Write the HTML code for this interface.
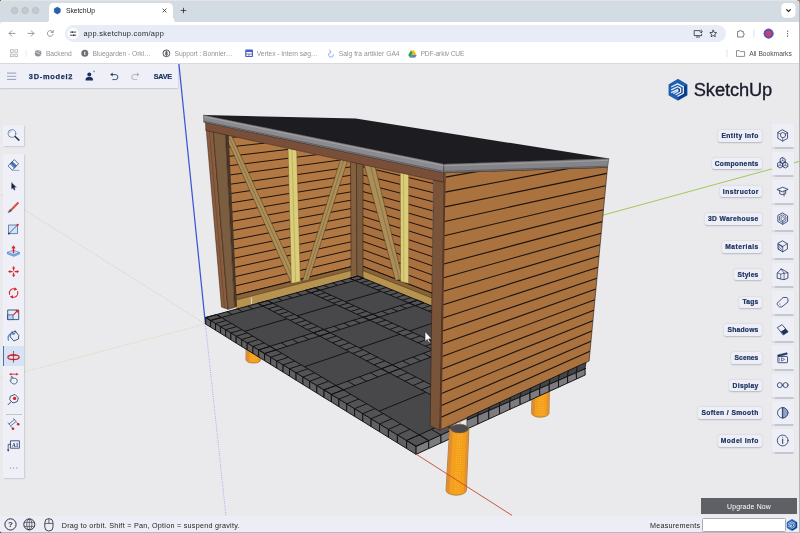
<!DOCTYPE html>
<html><head><meta charset="utf-8"><title>SketchUp</title>
<style>
html,body{margin:0;padding:0;background:#e9e9eb;}
body{width:800px;height:533px;overflow:hidden;font-family:"Liberation Sans",sans-serif;}
#root{position:relative;width:800px;height:533px;overflow:hidden;background:#eaeaec;}
.abs{position:absolute;}
svg{overflow:visible;}
#tabbar{left:0;top:0;width:800px;height:22px;background:#d3dbe3;}
#tab{left:49px;top:3px;width:124px;height:19px;background:#fff;border-radius:4.5px 4.5px 0 0;}
#toolbar{left:0;top:21.6px;width:800px;height:24px;background:#fff;border-radius:3.5px 3.5px 0 0;}
#urlpill{left:65px;top:25px;width:661px;height:17.4px;background:#e8ecf7;border-radius:9px;}
#bookbar{left:0;top:45px;width:800px;height:18.3px;background:#fff;border-bottom:0.8px solid #d9dade;}
.t{position:absolute;white-space:nowrap;line-height:1;transform-origin:0 50%;}
.bm{color:#909398;font-size:6.7px;top:49.9px;}
#apptb{left:0;top:63.9px;width:177.6px;height:23.7px;background:#eff0f7;box-shadow:0 0.8px 1.6px rgba(70,80,110,.42);}
.navy{color:#1d3160;font-weight:bold;}
.panel{position:absolute;background:#eff0f7;box-shadow:0.6px 0.8px 1.6px rgba(70,80,110,.42);}
#status{left:0;top:515.6px;width:800px;height:17.4px;background:#edeef5;}
.lab{position:absolute;height:11.7px;background:#eeeff6;border-radius:2px;box-shadow:0 0.9px 1.5px rgba(70,80,110,.32);}
.lt{color:#1d3160;font-weight:bold;font-size:6.7px;}
.ib{position:absolute;left:772px;width:22.2px;height:23px;background:#eeeff6;box-shadow:0 1.6px 0.9px rgba(150,155,178,.45);}
.ic{position:absolute;}

</style></head>
<body>
<div id="root">
<svg width="800" height="533" viewBox="0 0 800 533" style="position:absolute;left:0;top:0"><defs>
<linearGradient id="og" x1="0" x2="1" y1="0" y2="0"><stop offset="0" stop-color="#e08f3a"/><stop offset="0.22" stop-color="#f5a11c"/><stop offset="0.55" stop-color="#f8a81f"/><stop offset="0.85" stop-color="#f19a1a"/><stop offset="1" stop-color="#d98a3a"/></linearGradient>
<clipPath id="clipLW"><polygon points="227.0,135.1 351.0,161.9 351.0,282.0 236.0,312.0"/></clipPath>
<clipPath id="clipBW"><polygon points="363.0,164.5 433.0,179.7 432.0,312.0 363.0,282.0"/></clipPath>
<clipPath id="clipRW"><polygon points="443.8,172.7 607.5,167.3 589.1,361.1 439.8,430.2"/></clipPath>
</defs><line x1="205.4" y1="324.0" x2="800.0" y2="161.2" stroke="#97c03c" stroke-width="0.85" />
<line x1="205.4" y1="324.0" x2="0.0" y2="378.2" stroke="#c4c07a" stroke-width="0.7" stroke-dasharray="0.8 1.3" opacity="0.85"/>
<line x1="205.4" y1="324.0" x2="0.0" y2="194.4" stroke="#d3a48e" stroke-width="0.7" stroke-dasharray="0.8 1.3" opacity="0.85"/>
<line x1="178.9" y1="64.0" x2="205.4" y2="324.0" stroke="#3a55d8" stroke-width="1.25" />
<line x1="205.4" y1="324.0" x2="226.0" y2="516.0" stroke="#7f93e6" stroke-width="0.8" stroke-dasharray="0.8 1.4"/>
<path d="M246.4,335.0 L245.9,359.6 A7.5,3.9 0 0 0 260.8,359.6 L261.2,335.0 Z" fill="#f5a01a" stroke="#a8763a" stroke-width="0.8"/><path d="M246.8,335.0 L246.3,359.6 L249.1,362.5 L249.8,335.0 Z" fill="#d98a3c" opacity="0.85"/><path d="M260.8,335.0 L260.4,359.6 L258.2,362.3 L258.4,335.0 Z" fill="#dd8e3a" opacity="0.8"/><line x1="252.4" y1="339.0" x2="252.0" y2="362.0" stroke="#ffd76a" stroke-width="0.7" stroke-dasharray="0.7 1.6" opacity="0.85"/><line x1="254.4" y1="339.0" x2="254.0" y2="362.0" stroke="#ffd76a" stroke-width="0.7" stroke-dasharray="0.7 1.6" opacity="0.85"/><line x1="256.4" y1="339.0" x2="256.0" y2="362.0" stroke="#ffd76a" stroke-width="0.7" stroke-dasharray="0.7 1.6" opacity="0.85"/>
<path d="M532.2,380.0 L531.6,413.2 A8.7,4.0 0 0 0 549.0,413.2 L549.6,380.0 Z" fill="#f5a01a" stroke="#a8763a" stroke-width="0.8"/><path d="M532.6,380.0 L532.0,413.2 L534.8,416.2 L535.6,380.0 Z" fill="#d98a3c" opacity="0.85"/><path d="M549.2,380.0 L548.6,413.2 L546.4,416.0 L546.8,380.0 Z" fill="#dd8e3a" opacity="0.8"/><line x1="539.5" y1="384.0" x2="538.9" y2="415.7" stroke="#ffd76a" stroke-width="0.7" stroke-dasharray="0.7 1.6" opacity="0.85"/><line x1="541.5" y1="384.0" x2="540.9" y2="415.7" stroke="#ffd76a" stroke-width="0.7" stroke-dasharray="0.7 1.6" opacity="0.85"/><line x1="543.5" y1="384.0" x2="542.9" y2="415.7" stroke="#ffd76a" stroke-width="0.7" stroke-dasharray="0.7 1.6" opacity="0.85"/>
<g clip-path="url(#clipLW)">
<polygon points="200.0,100.0 360.0,100.0 360.0,320.0 200.0,320.0" fill="#b27843" />
<line x1="220.0" y1="299.0" x2="356.0" y2="265.5" stroke="#1c130c" stroke-width="1.0" />
<line x1="220.0" y1="289.6" x2="356.0" y2="257.2" stroke="#1c130c" stroke-width="1.0" />
<line x1="220.0" y1="280.1" x2="356.0" y2="248.9" stroke="#1c130c" stroke-width="1.0" />
<line x1="220.0" y1="270.7" x2="356.0" y2="240.7" stroke="#1c130c" stroke-width="1.0" />
<line x1="220.0" y1="261.2" x2="356.0" y2="232.4" stroke="#1c130c" stroke-width="1.0" />
<line x1="220.0" y1="251.8" x2="356.0" y2="224.1" stroke="#1c130c" stroke-width="1.0" />
<line x1="220.0" y1="242.4" x2="356.0" y2="215.8" stroke="#1c130c" stroke-width="1.0" />
<line x1="220.0" y1="232.9" x2="356.0" y2="207.6" stroke="#1c130c" stroke-width="1.0" />
<line x1="220.0" y1="223.5" x2="356.0" y2="199.3" stroke="#1c130c" stroke-width="1.0" />
<line x1="220.0" y1="214.1" x2="356.0" y2="191.0" stroke="#1c130c" stroke-width="1.0" />
<line x1="220.0" y1="204.6" x2="356.0" y2="182.8" stroke="#1c130c" stroke-width="1.0" />
<line x1="220.0" y1="195.2" x2="356.0" y2="174.5" stroke="#1c130c" stroke-width="1.0" />
<line x1="220.0" y1="185.7" x2="356.0" y2="166.2" stroke="#1c130c" stroke-width="1.0" />
<line x1="220.0" y1="176.3" x2="356.0" y2="157.9" stroke="#1c130c" stroke-width="1.0" />
<line x1="220.0" y1="166.9" x2="356.0" y2="149.7" stroke="#1c130c" stroke-width="1.0" />
<line x1="220.0" y1="157.4" x2="356.0" y2="141.4" stroke="#1c130c" stroke-width="1.0" />
<line x1="220.0" y1="148.0" x2="356.0" y2="133.1" stroke="#1c130c" stroke-width="1.0" />
<line x1="220.0" y1="138.5" x2="356.0" y2="124.8" stroke="#1c130c" stroke-width="1.0" />
<line x1="220.0" y1="129.1" x2="356.0" y2="116.6" stroke="#1c130c" stroke-width="1.0" />
<line x1="220.0" y1="119.7" x2="356.0" y2="108.3" stroke="#1c130c" stroke-width="1.0" />
<line x1="220.0" y1="110.2" x2="356.0" y2="100.0" stroke="#1c130c" stroke-width="1.0" />
<line x1="220.0" y1="100.8" x2="356.0" y2="91.8" stroke="#1c130c" stroke-width="1.0" />
<polygon points="225.0,297.8 358.0,265.0 358.0,268.7 225.0,302.8" fill="#8a6238" />
<polygon points="225.0,302.8 358.0,268.7 358.0,283.0 225.0,317.0" fill="#b6934f" stroke="#3a2a14" stroke-width="0.5" stroke-linejoin="round" />
<line x1="225.0" y1="297.8" x2="358.0" y2="265.0" stroke="#1c130c" stroke-width="1.0" />
<polygon points="224.5,134.0 231.5,135.5 298.5,282.0 291.5,283.6" fill="#ab8e58" stroke="#4a3818" stroke-width="0.5" stroke-linejoin="round" />
<line x1="228.0" y1="134.8" x2="295.0" y2="282.8" stroke="#7a6238" stroke-width="0.6" />
<polygon points="302.4,281.4 308.8,280.0 351.0,150.0 343.5,150.0" fill="#ab8e58" stroke="#4a3818" stroke-width="0.5" stroke-linejoin="round" />
<line x1="305.6" y1="280.7" x2="347.0" y2="150.0" stroke="#7a6238" stroke-width="0.6" />
<polygon points="287.8,140.0 296.4,140.0 300.4,281.5 291.4,283.6" fill="#dccd7c" stroke="#6a5a20" stroke-width="0.5" stroke-linejoin="round" />
<line x1="291.6" y1="140.0" x2="295.6" y2="282.5" stroke="#b9a955" stroke-width="0.8" />
</g>
<g clip-path="url(#clipBW)">
<polygon points="355.0,140.0 440.0,140.0 440.0,320.0 355.0,320.0" fill="#a97040" />
<line x1="355.0" y1="263.2" x2="440.0" y2="296.3" stroke="#1c130c" stroke-width="1.0" />
<line x1="355.0" y1="255.0" x2="440.0" y2="287.0" stroke="#1c130c" stroke-width="1.0" />
<line x1="355.0" y1="246.8" x2="440.0" y2="277.8" stroke="#1c130c" stroke-width="1.0" />
<line x1="355.0" y1="238.6" x2="440.0" y2="268.5" stroke="#1c130c" stroke-width="1.0" />
<line x1="355.0" y1="230.4" x2="440.0" y2="259.2" stroke="#1c130c" stroke-width="1.0" />
<line x1="355.0" y1="222.2" x2="440.0" y2="250.0" stroke="#1c130c" stroke-width="1.0" />
<line x1="355.0" y1="214.0" x2="440.0" y2="240.7" stroke="#1c130c" stroke-width="1.0" />
<line x1="355.0" y1="205.8" x2="440.0" y2="231.4" stroke="#1c130c" stroke-width="1.0" />
<line x1="355.0" y1="197.6" x2="440.0" y2="222.2" stroke="#1c130c" stroke-width="1.0" />
<line x1="355.0" y1="189.4" x2="440.0" y2="212.9" stroke="#1c130c" stroke-width="1.0" />
<line x1="355.0" y1="181.2" x2="440.0" y2="203.6" stroke="#1c130c" stroke-width="1.0" />
<line x1="355.0" y1="173.0" x2="440.0" y2="194.4" stroke="#1c130c" stroke-width="1.0" />
<line x1="355.0" y1="164.8" x2="440.0" y2="185.1" stroke="#1c130c" stroke-width="1.0" />
<line x1="355.0" y1="156.6" x2="440.0" y2="175.8" stroke="#1c130c" stroke-width="1.0" />
<line x1="355.0" y1="148.4" x2="440.0" y2="166.6" stroke="#1c130c" stroke-width="1.0" />
<line x1="355.0" y1="140.2" x2="440.0" y2="157.3" stroke="#1c130c" stroke-width="1.0" />
<line x1="355.0" y1="132.0" x2="440.0" y2="148.0" stroke="#1c130c" stroke-width="1.0" />
<line x1="355.0" y1="123.8" x2="440.0" y2="138.8" stroke="#1c130c" stroke-width="1.0" />
<line x1="355.0" y1="115.6" x2="440.0" y2="129.5" stroke="#1c130c" stroke-width="1.0" />
<line x1="355.0" y1="107.4" x2="440.0" y2="120.2" stroke="#1c130c" stroke-width="1.0" />
<polygon points="355.0,263.2 440.0,296.3 440.0,301.2 355.0,267.5" fill="#8a6238" />
<polygon points="355.0,267.5 440.0,301.2 440.0,318.0 355.0,285.0" fill="#b6934f" stroke="#3a2a14" stroke-width="0.5" stroke-linejoin="round" />
<line x1="355.0" y1="263.2" x2="440.0" y2="296.3" stroke="#1c130c" stroke-width="1.0" />
<polygon points="363.0,160.0 373.5,160.0 402.5,279.0 395.5,280.5" fill="#ab8e58" stroke="#4a3818" stroke-width="0.5" stroke-linejoin="round" />
<line x1="369.0" y1="160.0" x2="399.5" y2="279.8" stroke="#7a6238" stroke-width="0.6" />
<polygon points="400.2,165.0 408.7,165.0 408.7,283.6 400.6,281.5" fill="#dccd7c" stroke="#6a5a20" stroke-width="0.5" stroke-linejoin="round" />
<line x1="403.6" y1="165.0" x2="403.8" y2="282.5" stroke="#b9a955" stroke-width="0.8" />
</g>
<polygon points="350.5,159.8 356.5,161.1 356.8,282.0 351.2,282.0" fill="#83603f" stroke="#2a1a10" stroke-width="0.5" stroke-linejoin="round" />
<polygon points="356.5,161.1 363.0,162.5 363.0,282.0 356.8,282.0" fill="#7a5c3c" stroke="#2a1a10" stroke-width="0.5" stroke-linejoin="round" />
<polygon points="205.7,317.5 210.6,320.5 210.6,327.1 205.7,324.1" fill="#606062" stroke="#111112" stroke-width="0.95" stroke-linejoin="round" />
<polygon points="210.6,320.5 215.5,323.5 215.5,330.2 210.6,327.1" fill="#606062" stroke="#111112" stroke-width="0.95" stroke-linejoin="round" />
<polygon points="215.5,323.5 220.5,326.6 220.5,333.3 215.5,330.2" fill="#606062" stroke="#111112" stroke-width="0.95" stroke-linejoin="round" />
<polygon points="220.5,326.6 225.7,329.7 225.7,336.5 220.5,333.3" fill="#606062" stroke="#111112" stroke-width="0.95" stroke-linejoin="round" />
<polygon points="225.7,329.7 230.9,332.9 230.9,339.8 225.7,336.5" fill="#606062" stroke="#111112" stroke-width="0.95" stroke-linejoin="round" />
<polygon points="230.9,332.9 236.2,336.2 236.2,343.1 230.9,339.8" fill="#606062" stroke="#111112" stroke-width="0.95" stroke-linejoin="round" />
<polygon points="236.2,336.2 241.7,339.5 241.7,346.5 236.2,343.1" fill="#606062" stroke="#111112" stroke-width="0.95" stroke-linejoin="round" />
<polygon points="241.7,339.5 247.2,342.9 247.2,349.9 241.7,346.5" fill="#606062" stroke="#111112" stroke-width="0.95" stroke-linejoin="round" />
<polygon points="247.2,342.9 252.9,346.4 252.9,353.4 247.2,349.9" fill="#606062" stroke="#111112" stroke-width="0.95" stroke-linejoin="round" />
<polygon points="252.9,346.4 258.7,349.9 258.7,357.0 252.9,353.4" fill="#606062" stroke="#111112" stroke-width="0.95" stroke-linejoin="round" />
<polygon points="258.7,349.9 264.6,353.5 264.6,360.7 258.7,357.0" fill="#606062" stroke="#111112" stroke-width="0.95" stroke-linejoin="round" />
<polygon points="264.6,353.5 270.6,357.2 270.6,364.4 264.6,360.7" fill="#606062" stroke="#111112" stroke-width="0.95" stroke-linejoin="round" />
<polygon points="270.6,357.2 276.8,361.0 276.8,368.2 270.6,364.4" fill="#606062" stroke="#111112" stroke-width="0.95" stroke-linejoin="round" />
<polygon points="276.8,361.0 283.1,364.9 283.1,372.1 276.8,368.2" fill="#606062" stroke="#111112" stroke-width="0.95" stroke-linejoin="round" />
<polygon points="283.1,364.9 289.5,368.8 289.5,376.1 283.1,372.1" fill="#606062" stroke="#111112" stroke-width="0.95" stroke-linejoin="round" />
<polygon points="289.5,368.8 296.1,372.8 296.1,380.2 289.5,376.1" fill="#606062" stroke="#111112" stroke-width="0.95" stroke-linejoin="round" />
<polygon points="296.1,372.8 302.9,377.0 302.9,384.4 296.1,380.2" fill="#606062" stroke="#111112" stroke-width="0.95" stroke-linejoin="round" />
<polygon points="302.9,377.0 309.7,381.2 309.7,388.6 302.9,384.4" fill="#606062" stroke="#111112" stroke-width="0.95" stroke-linejoin="round" />
<polygon points="309.7,381.2 316.8,385.5 316.8,393.0 309.7,388.6" fill="#606062" stroke="#111112" stroke-width="0.95" stroke-linejoin="round" />
<polygon points="316.8,385.5 324.0,389.9 324.0,397.5 316.8,393.0" fill="#606062" stroke="#111112" stroke-width="0.95" stroke-linejoin="round" />
<polygon points="324.0,389.9 331.4,394.4 331.4,402.0 324.0,397.5" fill="#606062" stroke="#111112" stroke-width="0.95" stroke-linejoin="round" />
<polygon points="331.4,394.4 338.9,399.0 338.9,406.7 331.4,402.0" fill="#606062" stroke="#111112" stroke-width="0.95" stroke-linejoin="round" />
<polygon points="338.9,399.0 346.7,403.8 346.7,411.5 338.9,406.7" fill="#606062" stroke="#111112" stroke-width="0.95" stroke-linejoin="round" />
<polygon points="346.7,403.8 354.6,408.6 354.6,416.4 346.7,411.5" fill="#606062" stroke="#111112" stroke-width="0.95" stroke-linejoin="round" />
<polygon points="354.6,408.6 362.8,413.6 362.8,421.4 354.6,416.4" fill="#606062" stroke="#111112" stroke-width="0.95" stroke-linejoin="round" />
<polygon points="362.8,413.6 371.1,418.7 371.1,426.6 362.8,421.4" fill="#606062" stroke="#111112" stroke-width="0.95" stroke-linejoin="round" />
<polygon points="371.1,418.7 379.6,423.9 379.6,431.8 371.1,426.6" fill="#606062" stroke="#111112" stroke-width="0.95" stroke-linejoin="round" />
<polygon points="379.6,423.9 388.4,429.3 388.4,437.3 379.6,431.8" fill="#606062" stroke="#111112" stroke-width="0.95" stroke-linejoin="round" />
<polygon points="388.4,429.3 397.4,434.8 397.4,442.8 388.4,437.3" fill="#606062" stroke="#111112" stroke-width="0.95" stroke-linejoin="round" />
<polygon points="397.4,434.8 406.6,440.5 406.6,448.5 397.4,442.8" fill="#606062" stroke="#111112" stroke-width="0.95" stroke-linejoin="round" />
<polygon points="406.6,440.5 416.1,446.3 416.1,454.4 406.6,448.5" fill="#606062" stroke="#111112" stroke-width="0.95" stroke-linejoin="round" />
<polygon points="416.1,446.3 428.7,440.5 428.7,448.5 416.1,454.4" fill="#7c7c7f" stroke="#111112" stroke-width="0.95" stroke-linejoin="round" />
<polygon points="428.7,440.5 441.0,434.9 441.0,442.9 428.7,448.6" fill="#7c7c7f" stroke="#111112" stroke-width="0.95" stroke-linejoin="round" />
<polygon points="441.0,434.9 453.0,429.4 453.0,437.4 441.0,443.0" fill="#7c7c7f" stroke="#111112" stroke-width="0.95" stroke-linejoin="round" />
<polygon points="205.7,317.5 416.1,446.3 585.6,368.6 358.0,276.0" fill="#48484a" />
<polygon points="205.7,317.5 210.6,320.5 363.5,278.2 358.0,276.0" fill="#535355" />
<polygon points="258.7,349.9 264.6,353.5 424.0,302.8 417.5,300.2" fill="#535355" />
<polygon points="324.0,389.9 331.4,394.4 496.7,332.4 488.8,329.2" fill="#535355" />
<polygon points="406.6,440.5 416.1,446.3 585.6,368.6 575.9,364.6" fill="#535355" />
<polygon points="205.7,317.5 416.1,446.3 428.7,440.5 216.5,314.6" fill="#535355" />
<polygon points="257.8,303.3 476.0,418.8 487.2,413.7 267.7,300.6" fill="#535355" />
<polygon points="305.6,290.3 529.2,394.5 539.2,389.9 314.7,287.8" fill="#535355" />
<polygon points="349.6,278.3 576.7,372.7 585.6,368.6 358.0,276.0" fill="#535355" />
<line x1="205.7" y1="317.5" x2="358.0" y2="276.0" stroke="#111112" stroke-width="0.95" />
<line x1="210.6" y1="320.5" x2="363.5" y2="278.2" stroke="#111112" stroke-width="0.95" />
<line x1="205.7" y1="317.5" x2="210.6" y2="320.5" stroke="#111112" stroke-width="0.95" />
<line x1="216.5" y1="314.6" x2="221.4" y2="317.5" stroke="#111112" stroke-width="0.95" />
<line x1="227.1" y1="311.7" x2="232.1" y2="314.6" stroke="#111112" stroke-width="0.95" />
<line x1="237.5" y1="308.9" x2="242.5" y2="311.7" stroke="#111112" stroke-width="0.95" />
<line x1="247.8" y1="306.1" x2="252.8" y2="308.8" stroke="#111112" stroke-width="0.95" />
<line x1="257.8" y1="303.3" x2="262.9" y2="306.0" stroke="#111112" stroke-width="0.95" />
<line x1="267.7" y1="300.6" x2="272.8" y2="303.3" stroke="#111112" stroke-width="0.95" />
<line x1="277.4" y1="298.0" x2="282.6" y2="300.6" stroke="#111112" stroke-width="0.95" />
<line x1="286.9" y1="295.4" x2="292.2" y2="297.9" stroke="#111112" stroke-width="0.95" />
<line x1="296.3" y1="292.8" x2="301.6" y2="295.3" stroke="#111112" stroke-width="0.95" />
<line x1="305.6" y1="290.3" x2="310.9" y2="292.8" stroke="#111112" stroke-width="0.95" />
<line x1="314.7" y1="287.8" x2="320.0" y2="290.2" stroke="#111112" stroke-width="0.95" />
<line x1="323.6" y1="285.4" x2="329.0" y2="287.7" stroke="#111112" stroke-width="0.95" />
<line x1="332.4" y1="282.9" x2="337.8" y2="285.3" stroke="#111112" stroke-width="0.95" />
<line x1="341.1" y1="280.6" x2="346.5" y2="282.9" stroke="#111112" stroke-width="0.95" />
<line x1="349.6" y1="278.3" x2="355.1" y2="280.5" stroke="#111112" stroke-width="0.95" />
<line x1="358.0" y1="276.0" x2="363.5" y2="278.2" stroke="#111112" stroke-width="0.95" />
<line x1="258.7" y1="349.9" x2="417.5" y2="300.2" stroke="#111112" stroke-width="0.95" />
<line x1="264.6" y1="353.5" x2="424.0" y2="302.8" stroke="#111112" stroke-width="0.95" />
<line x1="258.7" y1="349.9" x2="264.6" y2="353.5" stroke="#111112" stroke-width="0.95" />
<line x1="270.1" y1="346.4" x2="276.0" y2="349.9" stroke="#111112" stroke-width="0.95" />
<line x1="281.2" y1="342.9" x2="287.2" y2="346.3" stroke="#111112" stroke-width="0.95" />
<line x1="292.2" y1="339.4" x2="298.2" y2="342.8" stroke="#111112" stroke-width="0.95" />
<line x1="302.9" y1="336.1" x2="309.0" y2="339.4" stroke="#111112" stroke-width="0.95" />
<line x1="313.4" y1="332.8" x2="319.6" y2="336.0" stroke="#111112" stroke-width="0.95" />
<line x1="323.8" y1="329.5" x2="330.0" y2="332.7" stroke="#111112" stroke-width="0.95" />
<line x1="333.9" y1="326.3" x2="340.2" y2="329.5" stroke="#111112" stroke-width="0.95" />
<line x1="343.9" y1="323.2" x2="350.2" y2="326.3" stroke="#111112" stroke-width="0.95" />
<line x1="353.7" y1="320.2" x2="360.0" y2="323.2" stroke="#111112" stroke-width="0.95" />
<line x1="363.3" y1="317.2" x2="369.7" y2="320.1" stroke="#111112" stroke-width="0.95" />
<line x1="372.7" y1="314.2" x2="379.1" y2="317.1" stroke="#111112" stroke-width="0.95" />
<line x1="382.0" y1="311.3" x2="388.4" y2="314.2" stroke="#111112" stroke-width="0.95" />
<line x1="391.1" y1="308.4" x2="397.6" y2="311.2" stroke="#111112" stroke-width="0.95" />
<line x1="400.0" y1="305.6" x2="406.5" y2="308.4" stroke="#111112" stroke-width="0.95" />
<line x1="408.8" y1="302.9" x2="415.3" y2="305.6" stroke="#111112" stroke-width="0.95" />
<line x1="417.5" y1="300.2" x2="424.0" y2="302.8" stroke="#111112" stroke-width="0.95" />
<line x1="324.0" y1="389.9" x2="488.8" y2="329.2" stroke="#111112" stroke-width="0.95" />
<line x1="331.4" y1="394.4" x2="496.7" y2="332.4" stroke="#111112" stroke-width="0.95" />
<line x1="324.0" y1="389.9" x2="331.4" y2="394.4" stroke="#111112" stroke-width="0.95" />
<line x1="336.0" y1="385.5" x2="343.4" y2="389.9" stroke="#111112" stroke-width="0.95" />
<line x1="347.7" y1="381.2" x2="355.2" y2="385.5" stroke="#111112" stroke-width="0.95" />
<line x1="359.2" y1="376.9" x2="366.7" y2="381.2" stroke="#111112" stroke-width="0.95" />
<line x1="370.4" y1="372.8" x2="378.0" y2="376.9" stroke="#111112" stroke-width="0.95" />
<line x1="381.4" y1="368.7" x2="389.1" y2="372.8" stroke="#111112" stroke-width="0.95" />
<line x1="392.2" y1="364.8" x2="399.9" y2="368.7" stroke="#111112" stroke-width="0.95" />
<line x1="402.7" y1="360.9" x2="410.5" y2="364.8" stroke="#111112" stroke-width="0.95" />
<line x1="413.1" y1="357.1" x2="420.8" y2="360.9" stroke="#111112" stroke-width="0.95" />
<line x1="423.2" y1="353.3" x2="431.0" y2="357.1" stroke="#111112" stroke-width="0.95" />
<line x1="433.1" y1="349.7" x2="440.9" y2="353.3" stroke="#111112" stroke-width="0.95" />
<line x1="442.9" y1="346.1" x2="450.7" y2="349.7" stroke="#111112" stroke-width="0.95" />
<line x1="452.4" y1="342.6" x2="460.3" y2="346.1" stroke="#111112" stroke-width="0.95" />
<line x1="461.8" y1="339.1" x2="469.6" y2="342.6" stroke="#111112" stroke-width="0.95" />
<line x1="470.9" y1="335.8" x2="478.8" y2="339.1" stroke="#111112" stroke-width="0.95" />
<line x1="480.0" y1="332.4" x2="487.9" y2="335.7" stroke="#111112" stroke-width="0.95" />
<line x1="488.8" y1="329.2" x2="496.7" y2="332.4" stroke="#111112" stroke-width="0.95" />
<line x1="406.6" y1="440.5" x2="575.9" y2="364.6" stroke="#111112" stroke-width="0.95" />
<line x1="416.1" y1="446.3" x2="585.6" y2="368.6" stroke="#111112" stroke-width="0.95" />
<line x1="406.6" y1="440.5" x2="416.1" y2="446.3" stroke="#111112" stroke-width="0.95" />
<line x1="419.2" y1="434.8" x2="428.7" y2="440.5" stroke="#111112" stroke-width="0.95" />
<line x1="431.4" y1="429.4" x2="441.0" y2="434.9" stroke="#111112" stroke-width="0.95" />
<line x1="443.3" y1="424.0" x2="453.0" y2="429.4" stroke="#111112" stroke-width="0.95" />
<line x1="455.0" y1="418.8" x2="464.6" y2="424.0" stroke="#111112" stroke-width="0.95" />
<line x1="466.4" y1="413.7" x2="476.0" y2="418.8" stroke="#111112" stroke-width="0.95" />
<line x1="477.5" y1="408.7" x2="487.2" y2="413.7" stroke="#111112" stroke-width="0.95" />
<line x1="488.3" y1="403.9" x2="498.1" y2="408.7" stroke="#111112" stroke-width="0.95" />
<line x1="498.9" y1="399.1" x2="508.7" y2="403.9" stroke="#111112" stroke-width="0.95" />
<line x1="509.3" y1="394.5" x2="519.1" y2="399.1" stroke="#111112" stroke-width="0.95" />
<line x1="519.5" y1="389.9" x2="529.2" y2="394.5" stroke="#111112" stroke-width="0.95" />
<line x1="529.4" y1="385.5" x2="539.2" y2="389.9" stroke="#111112" stroke-width="0.95" />
<line x1="539.1" y1="381.1" x2="548.9" y2="385.5" stroke="#111112" stroke-width="0.95" />
<line x1="548.6" y1="376.9" x2="558.4" y2="381.1" stroke="#111112" stroke-width="0.95" />
<line x1="557.9" y1="372.7" x2="567.6" y2="376.8" stroke="#111112" stroke-width="0.95" />
<line x1="567.0" y1="368.6" x2="576.7" y2="372.7" stroke="#111112" stroke-width="0.95" />
<line x1="575.9" y1="364.6" x2="585.6" y2="368.6" stroke="#111112" stroke-width="0.95" />
<line x1="205.7" y1="317.5" x2="416.1" y2="446.3" stroke="#111112" stroke-width="0.95" />
<line x1="216.5" y1="314.6" x2="428.7" y2="440.5" stroke="#111112" stroke-width="0.95" />
<line x1="205.7" y1="317.5" x2="216.5" y2="314.6" stroke="#111112" stroke-width="0.95" />
<line x1="210.6" y1="320.5" x2="221.4" y2="317.5" stroke="#111112" stroke-width="0.95" />
<line x1="215.5" y1="323.5" x2="226.4" y2="320.5" stroke="#111112" stroke-width="0.95" />
<line x1="220.5" y1="326.6" x2="231.5" y2="323.5" stroke="#111112" stroke-width="0.95" />
<line x1="225.7" y1="329.7" x2="236.7" y2="326.6" stroke="#111112" stroke-width="0.95" />
<line x1="230.9" y1="332.9" x2="242.0" y2="329.7" stroke="#111112" stroke-width="0.95" />
<line x1="236.2" y1="336.2" x2="247.4" y2="332.9" stroke="#111112" stroke-width="0.95" />
<line x1="241.7" y1="339.5" x2="252.9" y2="336.2" stroke="#111112" stroke-width="0.95" />
<line x1="247.2" y1="342.9" x2="258.5" y2="339.5" stroke="#111112" stroke-width="0.95" />
<line x1="252.9" y1="346.4" x2="264.2" y2="342.9" stroke="#111112" stroke-width="0.95" />
<line x1="258.7" y1="349.9" x2="270.1" y2="346.4" stroke="#111112" stroke-width="0.95" />
<line x1="264.6" y1="353.5" x2="276.0" y2="349.9" stroke="#111112" stroke-width="0.95" />
<line x1="270.6" y1="357.2" x2="282.1" y2="353.5" stroke="#111112" stroke-width="0.95" />
<line x1="276.8" y1="361.0" x2="288.4" y2="357.2" stroke="#111112" stroke-width="0.95" />
<line x1="283.1" y1="364.9" x2="294.7" y2="361.0" stroke="#111112" stroke-width="0.95" />
<line x1="289.5" y1="368.8" x2="301.2" y2="364.9" stroke="#111112" stroke-width="0.95" />
<line x1="296.1" y1="372.8" x2="307.9" y2="368.8" stroke="#111112" stroke-width="0.95" />
<line x1="302.9" y1="377.0" x2="314.7" y2="372.8" stroke="#111112" stroke-width="0.95" />
<line x1="309.7" y1="381.2" x2="321.6" y2="376.9" stroke="#111112" stroke-width="0.95" />
<line x1="316.8" y1="385.5" x2="328.7" y2="381.2" stroke="#111112" stroke-width="0.95" />
<line x1="324.0" y1="389.9" x2="336.0" y2="385.5" stroke="#111112" stroke-width="0.95" />
<line x1="331.4" y1="394.4" x2="343.4" y2="389.9" stroke="#111112" stroke-width="0.95" />
<line x1="338.9" y1="399.0" x2="351.0" y2="394.4" stroke="#111112" stroke-width="0.95" />
<line x1="346.7" y1="403.8" x2="358.8" y2="399.0" stroke="#111112" stroke-width="0.95" />
<line x1="354.6" y1="408.6" x2="366.8" y2="403.8" stroke="#111112" stroke-width="0.95" />
<line x1="362.8" y1="413.6" x2="375.0" y2="408.6" stroke="#111112" stroke-width="0.95" />
<line x1="371.1" y1="418.7" x2="383.4" y2="413.6" stroke="#111112" stroke-width="0.95" />
<line x1="379.6" y1="423.9" x2="392.0" y2="418.7" stroke="#111112" stroke-width="0.95" />
<line x1="388.4" y1="429.3" x2="400.8" y2="424.0" stroke="#111112" stroke-width="0.95" />
<line x1="397.4" y1="434.8" x2="409.9" y2="429.3" stroke="#111112" stroke-width="0.95" />
<line x1="406.6" y1="440.5" x2="419.2" y2="434.8" stroke="#111112" stroke-width="0.95" />
<line x1="416.1" y1="446.3" x2="428.7" y2="440.5" stroke="#111112" stroke-width="0.95" />
<line x1="257.8" y1="303.3" x2="476.0" y2="418.8" stroke="#111112" stroke-width="0.95" />
<line x1="267.7" y1="300.6" x2="487.2" y2="413.7" stroke="#111112" stroke-width="0.95" />
<line x1="257.8" y1="303.3" x2="267.7" y2="300.6" stroke="#111112" stroke-width="0.95" />
<line x1="262.9" y1="306.0" x2="272.8" y2="303.3" stroke="#111112" stroke-width="0.95" />
<line x1="268.1" y1="308.8" x2="278.1" y2="306.0" stroke="#111112" stroke-width="0.95" />
<line x1="273.4" y1="311.6" x2="283.4" y2="308.7" stroke="#111112" stroke-width="0.95" />
<line x1="278.8" y1="314.4" x2="288.9" y2="311.5" stroke="#111112" stroke-width="0.95" />
<line x1="284.3" y1="317.3" x2="294.4" y2="314.4" stroke="#111112" stroke-width="0.95" />
<line x1="289.9" y1="320.3" x2="300.1" y2="317.3" stroke="#111112" stroke-width="0.95" />
<line x1="295.6" y1="323.3" x2="305.8" y2="320.3" stroke="#111112" stroke-width="0.95" />
<line x1="301.4" y1="326.4" x2="311.7" y2="323.3" stroke="#111112" stroke-width="0.95" />
<line x1="307.4" y1="329.6" x2="317.7" y2="326.4" stroke="#111112" stroke-width="0.95" />
<line x1="313.4" y1="332.8" x2="323.8" y2="329.5" stroke="#111112" stroke-width="0.95" />
<line x1="319.6" y1="336.0" x2="330.0" y2="332.7" stroke="#111112" stroke-width="0.95" />
<line x1="325.9" y1="339.4" x2="336.4" y2="336.0" stroke="#111112" stroke-width="0.95" />
<line x1="332.4" y1="342.8" x2="342.8" y2="339.3" stroke="#111112" stroke-width="0.95" />
<line x1="338.9" y1="346.3" x2="349.5" y2="342.8" stroke="#111112" stroke-width="0.95" />
<line x1="345.6" y1="349.8" x2="356.2" y2="346.2" stroke="#111112" stroke-width="0.95" />
<line x1="352.5" y1="353.4" x2="363.1" y2="349.8" stroke="#111112" stroke-width="0.95" />
<line x1="359.5" y1="357.1" x2="370.1" y2="353.4" stroke="#111112" stroke-width="0.95" />
<line x1="366.6" y1="360.9" x2="377.3" y2="357.1" stroke="#111112" stroke-width="0.95" />
<line x1="374.0" y1="364.8" x2="384.7" y2="360.9" stroke="#111112" stroke-width="0.95" />
<line x1="381.4" y1="368.7" x2="392.2" y2="364.8" stroke="#111112" stroke-width="0.95" />
<line x1="389.1" y1="372.8" x2="399.9" y2="368.7" stroke="#111112" stroke-width="0.95" />
<line x1="396.9" y1="376.9" x2="407.7" y2="372.8" stroke="#111112" stroke-width="0.95" />
<line x1="404.9" y1="381.1" x2="415.7" y2="376.9" stroke="#111112" stroke-width="0.95" />
<line x1="413.0" y1="385.5" x2="424.0" y2="381.1" stroke="#111112" stroke-width="0.95" />
<line x1="421.4" y1="389.9" x2="432.4" y2="385.5" stroke="#111112" stroke-width="0.95" />
<line x1="430.0" y1="394.4" x2="441.0" y2="389.9" stroke="#111112" stroke-width="0.95" />
<line x1="438.7" y1="399.1" x2="449.8" y2="394.4" stroke="#111112" stroke-width="0.95" />
<line x1="447.7" y1="403.8" x2="458.8" y2="399.1" stroke="#111112" stroke-width="0.95" />
<line x1="456.9" y1="408.7" x2="468.0" y2="403.8" stroke="#111112" stroke-width="0.95" />
<line x1="466.4" y1="413.7" x2="477.5" y2="408.7" stroke="#111112" stroke-width="0.95" />
<line x1="476.0" y1="418.8" x2="487.2" y2="413.7" stroke="#111112" stroke-width="0.95" />
<line x1="305.6" y1="290.3" x2="529.2" y2="394.5" stroke="#111112" stroke-width="0.95" />
<line x1="314.7" y1="287.8" x2="539.2" y2="389.9" stroke="#111112" stroke-width="0.95" />
<line x1="305.6" y1="290.3" x2="314.7" y2="287.8" stroke="#111112" stroke-width="0.95" />
<line x1="310.9" y1="292.8" x2="320.0" y2="290.2" stroke="#111112" stroke-width="0.95" />
<line x1="316.3" y1="295.3" x2="325.5" y2="292.7" stroke="#111112" stroke-width="0.95" />
<line x1="321.8" y1="297.8" x2="331.0" y2="295.2" stroke="#111112" stroke-width="0.95" />
<line x1="327.4" y1="300.4" x2="336.6" y2="297.8" stroke="#111112" stroke-width="0.95" />
<line x1="333.1" y1="303.1" x2="342.4" y2="300.4" stroke="#111112" stroke-width="0.95" />
<line x1="338.9" y1="305.8" x2="348.2" y2="303.1" stroke="#111112" stroke-width="0.95" />
<line x1="344.8" y1="308.6" x2="354.2" y2="305.8" stroke="#111112" stroke-width="0.95" />
<line x1="350.9" y1="311.4" x2="360.2" y2="308.5" stroke="#111112" stroke-width="0.95" />
<line x1="357.0" y1="314.2" x2="366.4" y2="311.3" stroke="#111112" stroke-width="0.95" />
<line x1="363.3" y1="317.2" x2="372.7" y2="314.2" stroke="#111112" stroke-width="0.95" />
<line x1="369.7" y1="320.1" x2="379.1" y2="317.1" stroke="#111112" stroke-width="0.95" />
<line x1="376.2" y1="323.2" x2="385.7" y2="320.1" stroke="#111112" stroke-width="0.95" />
<line x1="382.8" y1="326.2" x2="392.3" y2="323.1" stroke="#111112" stroke-width="0.95" />
<line x1="389.6" y1="329.4" x2="399.1" y2="326.2" stroke="#111112" stroke-width="0.95" />
<line x1="396.5" y1="332.6" x2="406.0" y2="329.4" stroke="#111112" stroke-width="0.95" />
<line x1="403.5" y1="335.9" x2="413.1" y2="332.6" stroke="#111112" stroke-width="0.95" />
<line x1="410.7" y1="339.2" x2="420.3" y2="335.9" stroke="#111112" stroke-width="0.95" />
<line x1="418.0" y1="342.6" x2="427.7" y2="339.2" stroke="#111112" stroke-width="0.95" />
<line x1="425.5" y1="346.1" x2="435.2" y2="342.6" stroke="#111112" stroke-width="0.95" />
<line x1="433.1" y1="349.7" x2="442.9" y2="346.1" stroke="#111112" stroke-width="0.95" />
<line x1="440.9" y1="353.3" x2="450.7" y2="349.7" stroke="#111112" stroke-width="0.95" />
<line x1="448.9" y1="357.0" x2="458.7" y2="353.3" stroke="#111112" stroke-width="0.95" />
<line x1="457.1" y1="360.8" x2="466.9" y2="357.0" stroke="#111112" stroke-width="0.95" />
<line x1="465.4" y1="364.7" x2="475.2" y2="360.8" stroke="#111112" stroke-width="0.95" />
<line x1="473.9" y1="368.7" x2="483.7" y2="364.7" stroke="#111112" stroke-width="0.95" />
<line x1="482.6" y1="372.7" x2="492.5" y2="368.7" stroke="#111112" stroke-width="0.95" />
<line x1="491.5" y1="376.9" x2="501.4" y2="372.7" stroke="#111112" stroke-width="0.95" />
<line x1="500.6" y1="381.1" x2="510.5" y2="376.9" stroke="#111112" stroke-width="0.95" />
<line x1="509.9" y1="385.5" x2="519.8" y2="381.1" stroke="#111112" stroke-width="0.95" />
<line x1="519.5" y1="389.9" x2="529.4" y2="385.5" stroke="#111112" stroke-width="0.95" />
<line x1="529.2" y1="394.5" x2="539.2" y2="389.9" stroke="#111112" stroke-width="0.95" />
<line x1="349.6" y1="278.3" x2="576.7" y2="372.7" stroke="#111112" stroke-width="0.95" />
<line x1="358.0" y1="276.0" x2="585.6" y2="368.6" stroke="#111112" stroke-width="0.95" />
<line x1="349.6" y1="278.3" x2="358.0" y2="276.0" stroke="#111112" stroke-width="0.95" />
<line x1="355.1" y1="280.5" x2="363.5" y2="278.2" stroke="#111112" stroke-width="0.95" />
<line x1="360.6" y1="282.8" x2="369.1" y2="280.5" stroke="#111112" stroke-width="0.95" />
<line x1="366.3" y1="285.2" x2="374.8" y2="282.8" stroke="#111112" stroke-width="0.95" />
<line x1="372.1" y1="287.6" x2="380.6" y2="285.1" stroke="#111112" stroke-width="0.95" />
<line x1="377.9" y1="290.0" x2="386.4" y2="287.5" stroke="#111112" stroke-width="0.95" />
<line x1="383.9" y1="292.5" x2="392.4" y2="290.0" stroke="#111112" stroke-width="0.95" />
<line x1="390.0" y1="295.0" x2="398.5" y2="292.5" stroke="#111112" stroke-width="0.95" />
<line x1="396.1" y1="297.6" x2="404.7" y2="295.0" stroke="#111112" stroke-width="0.95" />
<line x1="402.4" y1="300.2" x2="411.0" y2="297.6" stroke="#111112" stroke-width="0.95" />
<line x1="408.8" y1="302.9" x2="417.5" y2="300.2" stroke="#111112" stroke-width="0.95" />
<line x1="415.3" y1="305.6" x2="424.0" y2="302.8" stroke="#111112" stroke-width="0.95" />
<line x1="422.0" y1="308.4" x2="430.7" y2="305.5" stroke="#111112" stroke-width="0.95" />
<line x1="428.8" y1="311.2" x2="437.5" y2="308.3" stroke="#111112" stroke-width="0.95" />
<line x1="435.7" y1="314.0" x2="444.4" y2="311.1" stroke="#111112" stroke-width="0.95" />
<line x1="442.7" y1="317.0" x2="451.4" y2="314.0" stroke="#111112" stroke-width="0.95" />
<line x1="449.9" y1="319.9" x2="458.6" y2="316.9" stroke="#111112" stroke-width="0.95" />
<line x1="457.2" y1="323.0" x2="465.9" y2="319.9" stroke="#111112" stroke-width="0.95" />
<line x1="464.6" y1="326.1" x2="473.4" y2="322.9" stroke="#111112" stroke-width="0.95" />
<line x1="472.2" y1="329.2" x2="481.0" y2="326.0" stroke="#111112" stroke-width="0.95" />
<line x1="480.0" y1="332.4" x2="488.8" y2="329.2" stroke="#111112" stroke-width="0.95" />
<line x1="487.9" y1="335.7" x2="496.7" y2="332.4" stroke="#111112" stroke-width="0.95" />
<line x1="495.9" y1="339.1" x2="504.8" y2="335.7" stroke="#111112" stroke-width="0.95" />
<line x1="504.2" y1="342.5" x2="513.0" y2="339.1" stroke="#111112" stroke-width="0.95" />
<line x1="512.6" y1="346.0" x2="521.5" y2="342.5" stroke="#111112" stroke-width="0.95" />
<line x1="521.2" y1="349.6" x2="530.0" y2="346.0" stroke="#111112" stroke-width="0.95" />
<line x1="529.9" y1="353.2" x2="538.8" y2="349.6" stroke="#111112" stroke-width="0.95" />
<line x1="538.9" y1="356.9" x2="547.8" y2="353.2" stroke="#111112" stroke-width="0.95" />
<line x1="548.0" y1="360.8" x2="556.9" y2="356.9" stroke="#111112" stroke-width="0.95" />
<line x1="557.4" y1="364.6" x2="566.3" y2="360.7" stroke="#111112" stroke-width="0.95" />
<line x1="567.0" y1="368.6" x2="575.9" y2="364.6" stroke="#111112" stroke-width="0.95" />
<line x1="576.7" y1="372.7" x2="585.6" y2="368.6" stroke="#111112" stroke-width="0.95" />
<line x1="244.7" y1="331.3" x2="287.1" y2="318.8" stroke="#111112" stroke-width="0.95" />
<line x1="297.2" y1="315.8" x2="336.0" y2="304.4" stroke="#111112" stroke-width="0.95" />
<line x1="345.3" y1="301.7" x2="380.9" y2="291.3" stroke="#111112" stroke-width="0.95" />
<line x1="304.5" y1="366.8" x2="349.1" y2="351.6" stroke="#111112" stroke-width="0.95" />
<line x1="359.6" y1="348.0" x2="400.0" y2="334.2" stroke="#111112" stroke-width="0.95" />
<line x1="409.6" y1="331.0" x2="446.3" y2="318.4" stroke="#111112" stroke-width="0.95" />
<line x1="379.2" y1="411.1" x2="425.7" y2="392.2" stroke="#111112" stroke-width="0.95" />
<line x1="436.6" y1="387.7" x2="478.2" y2="370.7" stroke="#111112" stroke-width="0.95" />
<line x1="488.1" y1="366.7" x2="525.5" y2="351.4" stroke="#111112" stroke-width="0.95" />
<polygon points="225.2,133.0 228.6,134.0 237.0,306.5 234.5,307.6" fill="#4a3626" />
<polygon points="206.2,129.0 213.2,130.6 228.0,309.3 221.5,307.0" fill="#8b5d3f" stroke="#2a1a10" stroke-width="0.5" stroke-linejoin="round" />
<polygon points="213.2,130.6 225.4,133.0 234.5,307.6 228.0,309.3" fill="#7b5d3f" stroke="#2a1a10" stroke-width="0.5" stroke-linejoin="round" />
<line x1="209.4" y1="130.0" x2="224.5" y2="308.0" stroke="#5a3b28" stroke-width="0.5" />
<line x1="251.5" y1="297.5" x2="251.5" y2="304.0" stroke="#cfcfcf" stroke-width="1.2" />
<g clip-path="url(#clipRW)">
<polygon points="430.0,150.0 620.0,150.0 620.0,440.0 430.0,440.0" fill="#a9723f" />
<line x1="445.5" y1="177.1" x2="609.3" y2="148.2" stroke="#1c130c" stroke-width="1.1" />
<line x1="445.2" y1="192.1" x2="608.1" y2="160.9" stroke="#1c130c" stroke-width="1.1" />
<line x1="445.0" y1="206.9" x2="606.9" y2="173.4" stroke="#1c130c" stroke-width="1.1" />
<line x1="444.7" y1="221.5" x2="605.7" y2="185.7" stroke="#1c130c" stroke-width="1.1" />
<line x1="444.4" y1="235.8" x2="604.6" y2="197.8" stroke="#1c130c" stroke-width="1.1" />
<line x1="444.2" y1="250.0" x2="603.4" y2="209.8" stroke="#1c130c" stroke-width="1.1" />
<line x1="443.9" y1="264.0" x2="602.3" y2="221.6" stroke="#1c130c" stroke-width="1.1" />
<line x1="443.7" y1="277.7" x2="601.2" y2="233.2" stroke="#1c130c" stroke-width="1.1" />
<line x1="443.4" y1="291.3" x2="600.1" y2="244.7" stroke="#1c130c" stroke-width="1.1" />
<line x1="443.2" y1="304.7" x2="599.0" y2="256.0" stroke="#1c130c" stroke-width="1.1" />
<line x1="443.0" y1="317.9" x2="598.0" y2="267.2" stroke="#1c130c" stroke-width="1.1" />
<line x1="442.7" y1="330.9" x2="596.9" y2="278.2" stroke="#1c130c" stroke-width="1.1" />
<line x1="442.5" y1="343.7" x2="595.9" y2="289.0" stroke="#1c130c" stroke-width="1.1" />
<line x1="442.3" y1="356.4" x2="594.9" y2="299.7" stroke="#1c130c" stroke-width="1.1" />
<line x1="442.0" y1="368.9" x2="593.9" y2="310.3" stroke="#1c130c" stroke-width="1.1" />
<line x1="441.8" y1="381.2" x2="592.9" y2="320.7" stroke="#1c130c" stroke-width="1.1" />
<line x1="441.6" y1="393.4" x2="591.9" y2="331.0" stroke="#1c130c" stroke-width="1.1" />
<line x1="441.4" y1="405.4" x2="591.0" y2="341.2" stroke="#1c130c" stroke-width="1.1" />
<line x1="441.2" y1="417.2" x2="590.0" y2="351.2" stroke="#1c130c" stroke-width="1.1" />
</g>
<polygon points="443.8,172.7 607.5,167.3 589.1,361.1 439.8,430.2" fill="none" stroke="#2a1a10" stroke-width="0.6"/>
<polygon points="433.4,179.5 444.2,182.0 439.8,430.2 430.2,425.8" fill="#7a5438" stroke="#2a1a10" stroke-width="0.5" stroke-linejoin="round" />
<polygon points="444.2,182.0 445.6,177.0 441.4,429.5 439.8,430.2" fill="#5a3a2a" />
<polygon points="467.6,417.3 478.8,412.1 477.8,415.4 466.6,420.3" fill="#454548" stroke="#111112" stroke-width="0.76" stroke-linejoin="round" />
<polygon points="466.6,420.3 477.8,415.4 478.0,424.0 466.8,429.1" fill="#7b7b80" stroke="#111112" stroke-width="0.95" stroke-linejoin="round" />
<polygon points="478.8,412.1 489.7,407.1 488.7,410.7 477.8,415.4" fill="#454548" stroke="#111112" stroke-width="0.76" stroke-linejoin="round" />
<polygon points="477.8,415.4 488.7,410.7 488.9,419.0 478.0,424.0" fill="#7b7b80" stroke="#111112" stroke-width="0.95" stroke-linejoin="round" />
<polygon points="489.7,407.1 500.4,402.1 499.4,406.0 488.7,410.7" fill="#454548" stroke="#111112" stroke-width="0.76" stroke-linejoin="round" />
<polygon points="488.7,410.7 499.4,406.0 499.6,414.1 488.9,419.0" fill="#7b7b80" stroke="#111112" stroke-width="0.95" stroke-linejoin="round" />
<polygon points="500.4,402.1 510.8,397.3 509.8,401.5 499.4,406.0" fill="#454548" stroke="#111112" stroke-width="0.76" stroke-linejoin="round" />
<polygon points="499.4,406.0 509.8,401.5 510.0,409.3 499.6,414.1" fill="#7b7b80" stroke="#111112" stroke-width="0.95" stroke-linejoin="round" />
<polygon points="510.8,397.3 521.0,392.6 520.0,397.1 509.8,401.5" fill="#454548" stroke="#111112" stroke-width="0.76" stroke-linejoin="round" />
<polygon points="509.8,401.5 520.0,397.1 520.2,404.7 510.0,409.3" fill="#7b7b80" stroke="#111112" stroke-width="0.95" stroke-linejoin="round" />
<polygon points="521.0,392.6 530.9,388.0 529.9,392.8 520.0,397.1" fill="#454548" stroke="#111112" stroke-width="0.76" stroke-linejoin="round" />
<polygon points="520.0,397.1 529.9,392.8 530.1,400.2 520.2,404.7" fill="#7b7b80" stroke="#111112" stroke-width="0.95" stroke-linejoin="round" />
<polygon points="530.9,388.0 540.6,383.5 539.6,388.5 529.9,392.8" fill="#454548" stroke="#111112" stroke-width="0.76" stroke-linejoin="round" />
<polygon points="529.9,392.8 539.6,388.5 539.8,395.7 530.1,400.2" fill="#7b7b80" stroke="#111112" stroke-width="0.95" stroke-linejoin="round" />
<polygon points="540.6,383.5 550.1,379.1 549.1,384.4 539.6,388.5" fill="#454548" stroke="#111112" stroke-width="0.76" stroke-linejoin="round" />
<polygon points="539.6,388.5 549.1,384.4 549.3,391.4 539.8,395.7" fill="#7b7b80" stroke="#111112" stroke-width="0.95" stroke-linejoin="round" />
<polygon points="550.1,379.1 559.4,374.8 558.4,380.4 549.1,384.4" fill="#454548" stroke="#111112" stroke-width="0.76" stroke-linejoin="round" />
<polygon points="549.1,384.4 558.4,380.4 558.6,387.2 549.3,391.4" fill="#7b7b80" stroke="#111112" stroke-width="0.95" stroke-linejoin="round" />
<polygon points="559.4,374.8 568.5,370.6 567.5,376.4 558.4,380.4" fill="#454548" stroke="#111112" stroke-width="0.76" stroke-linejoin="round" />
<polygon points="558.4,380.4 567.5,376.4 567.7,383.0 558.6,387.2" fill="#7b7b80" stroke="#111112" stroke-width="0.95" stroke-linejoin="round" />
<polygon points="568.5,370.6 577.3,366.5 576.3,372.6 567.5,376.4" fill="#454548" stroke="#111112" stroke-width="0.76" stroke-linejoin="round" />
<polygon points="567.5,376.4 576.3,372.6 576.5,379.0 567.7,383.0" fill="#7b7b80" stroke="#111112" stroke-width="0.95" stroke-linejoin="round" />
<polygon points="577.3,366.5 586.0,362.5 585.0,368.8 576.3,372.6" fill="#454548" stroke="#111112" stroke-width="0.76" stroke-linejoin="round" />
<polygon points="576.3,372.6 585.0,368.8 585.2,375.0 576.5,379.0" fill="#7b7b80" stroke="#111112" stroke-width="0.95" stroke-linejoin="round" />
<polygon points="205.5,122.0 443.8,172.7 443.8,182.2 205.9,130.5" fill="#7a4f3a" stroke="#2a1a10" stroke-width="0.5" stroke-linejoin="round" />
<polygon points="443.8,172.7 445.6,172.7 445.6,181.5 443.8,182.2" fill="#6a4432" />
<polygon points="203.6,115.0 443.8,163.9 443.8,172.7 203.8,122.3" fill="#8b8b8f" stroke="#2a2a2c" stroke-width="0.5" stroke-linejoin="round" />
<polygon points="443.8,163.9 608.9,158.6 607.5,167.3 443.8,172.7" fill="#858589" stroke="#2a2a2c" stroke-width="0.5" stroke-linejoin="round" />
<line x1="203.8" y1="116.6" x2="443.8" y2="165.8" stroke="#a5a5a9" stroke-width="0.9" />
<line x1="443.8" y1="165.8" x2="608.6" y2="160.3" stroke="#a0a0a4" stroke-width="0.9" />
<line x1="203.8" y1="121.2" x2="443.8" y2="171.4" stroke="#5a5a5e" stroke-width="0.9" />
<line x1="443.8" y1="171.4" x2="607.7" y2="166.2" stroke="#5a5a5e" stroke-width="0.9" />
<polygon points="203.6,115.0 355.7,118.5 608.9,158.6 443.8,163.9" fill="#1d1d21" />
<polygon points="452.8,425.2 466.6,418.9 466.6,440.0 452.8,440.0" fill="#e9e9eb" />
<path d="M449.6,429.0 L446.0,490.3 A10.2,4.9 0 0 0 466.4,490.3 L468.9,429.0 Z" fill="#f5a01a" stroke="#a8763a" stroke-width="0.8"/><path d="M450.0,429.0 L446.4,490.3 L449.2,494.0 L453.0,429.0 Z" fill="#d98a3c" opacity="0.85"/><path d="M468.5,429.0 L466.0,490.3 L463.8,493.7 L466.1,429.0 Z" fill="#dd8e3a" opacity="0.8"/><line x1="457.9" y1="433.0" x2="454.8" y2="493.7" stroke="#ffd76a" stroke-width="0.7" stroke-dasharray="0.7 1.6" opacity="0.85"/><line x1="459.9" y1="433.0" x2="456.8" y2="493.7" stroke="#ffd76a" stroke-width="0.7" stroke-dasharray="0.7 1.6" opacity="0.85"/><line x1="461.9" y1="433.0" x2="458.8" y2="493.7" stroke="#ffd76a" stroke-width="0.7" stroke-dasharray="0.7 1.6" opacity="0.85"/>
<line x1="460" y1="421" x2="460" y2="428.5" stroke="#9a9a9a" stroke-width="0.9"/>
<ellipse cx="459.5" cy="428.6" rx="9.0" ry="4.3" fill="#4c4c50" stroke="#8a5a28" stroke-width="0.6"/>
<line x1="415.7" y1="453.9" x2="512.0" y2="515.4" stroke="#c8452c" stroke-width="0.9" />
<path d="M425,331.5 L425,341.5 L427.3,339.4 L428.9,343 L430.3,342.4 L428.8,338.9 L431.8,338.7 Z" fill="#fff" stroke="#222" stroke-width="0.6"/></svg>
<div class="abs" id="tabbar"></div>
<div class="abs" id="tab"></div>
<div class="abs" style="left:44.5px;top:17.5px;width:4.5px;height:4.5px;background:radial-gradient(circle at 0 0,#d3dbe3 4.4px,#fff 4.6px);"></div>
<div class="abs" style="left:173px;top:17.5px;width:4.5px;height:4.5px;background:radial-gradient(circle at 100% 0,#d3dbe3 4.4px,#fff 4.6px);"></div>
<div class="abs" id="toolbar"></div>
<div class="abs" id="urlpill"></div>
<div class="abs" id="bookbar"></div>
<div class="abs" id="apptb"></div>
<div class="panel" style="left:2.8px;top:124.6px;width:21.6px;height:21.4px;"></div>
<div class="panel" style="left:2.8px;top:153.8px;width:21.6px;height:324.6px;"></div>
<div class="abs" style="left:3.8px;top:346px;width:19.8px;height:19.8px;background:#d6e3f4;"></div>
<div class="abs" style="left:2.8px;top:346px;width:1.6px;height:19.8px;background:#4673b0;"></div>
<div class="abs" style="left:5.5px;top:413.6px;width:16px;height:0.7px;background:#c3c6d0;"></div>
<div class="abs" id="status"></div>
<div class="abs" style="left:702.2px;top:518.2px;width:81.6px;height:11.6px;background:#fff;border:0.7px solid #a9abb3;border-radius:1.5px;"></div>
<div class="abs" style="left:700.8px;top:498.3px;width:96px;height:16px;background:#5f6065;"></div>
<div class="abs" style="left:798.6px;top:2px;width:1.4px;height:531px;background:#b2b2b4;"></div>
<div class="abs" style="left:0;top:0;width:800px;height:0.8px;background:#e6e3e2;"></div>
<div class="abs" style="left:0;top:531.8px;width:800px;height:1.2px;background:#b9b9bb;"></div>
<div class="abs" style="left:0;top:0;width:3.4px;height:3.4px;background:radial-gradient(circle at 100% 100%,rgba(0,0,0,0) 3.1px,#8a5a3c 3.5px);"></div>
<div class="abs" style="left:795.8px;top:0;width:4.2px;height:4.2px;background:radial-gradient(circle at 0 100%,rgba(0,0,0,0) 3.6px,#a9785a 4px);"></div>
<div class="abs" style="left:0;top:529.8px;width:3.2px;height:3.2px;background:radial-gradient(circle at 100% 0,rgba(0,0,0,0) 2.8px,#6a5a4c 3.2px);"></div>

<div class="lab" style="left:718.3px;top:130.1px;width:43.9px;"></div>
<div class="ib" style="top:124.1px;"></div>
<div class="lab" style="left:711.5px;top:157.8px;width:50.7px;"></div>
<div class="ib" style="top:151.8px;"></div>
<div class="lab" style="left:719.6px;top:185.6px;width:42.6px;"></div>
<div class="ib" style="top:179.6px;"></div>
<div class="lab" style="left:704.8px;top:213.3px;width:57.4px;"></div>
<div class="ib" style="top:207.3px;"></div>
<div class="lab" style="left:722.0px;top:241.0px;width:40.2px;"></div>
<div class="ib" style="top:235.0px;"></div>
<div class="lab" style="left:734.4px;top:268.8px;width:27.8px;"></div>
<div class="ib" style="top:262.8px;"></div>
<div class="lab" style="left:739.2px;top:296.5px;width:23.0px;"></div>
<div class="ib" style="top:290.5px;"></div>
<div class="lab" style="left:724.4px;top:324.2px;width:37.8px;"></div>
<div class="ib" style="top:318.2px;"></div>
<div class="lab" style="left:731.4px;top:351.9px;width:30.8px;"></div>
<div class="ib" style="top:345.9px;"></div>
<div class="lab" style="left:729.4px;top:379.7px;width:32.8px;"></div>
<div class="ib" style="top:373.7px;"></div>
<div class="lab" style="left:698.2px;top:407.4px;width:64.0px;"></div>
<div class="ib" style="top:401.4px;"></div>
<div class="lab" style="left:717.6px;top:435.1px;width:44.6px;"></div>
<div class="ib" style="top:429.1px;"></div>
<svg class="ic" style="left:0;top:0;will-change:transform;opacity:0.999" width="800" height="533" viewBox="0 0 800 533">
<!-- traffic lights -->
<g fill="#c6cad0" stroke="#b3b7be" stroke-width="0.6"><circle cx="14.6" cy="10.5" r="3.2"/><circle cx="25.1" cy="10.5" r="3.2"/><circle cx="35.6" cy="10.5" r="3.2"/></g>
<!-- favicon -->
<path d="M57.3,7.2 L60.2,8.8 L60.2,12.2 L57.3,13.9 L54.4,12.2 L54.4,8.8 Z" fill="#2b5fae" stroke="#2b5fae" stroke-width="0.8" stroke-linejoin="round"/>
<!-- tab close, new tab -->
<path d="M162.6,8.6 L166.4,12.4 M166.4,8.6 L162.6,12.4" stroke="#2a2c30" stroke-width="0.8" fill="none"/>
<path d="M183.5,7.8 V13.2 M180.8,10.5 H186.2" stroke="#2a2c30" stroke-width="0.8" fill="none"/>
<!-- chevron button -->
<rect x="781.3" y="3" width="14.2" height="14.7" rx="4.2" fill="#fff"/>
<path d="M786.3,9.3 L788.5,11.5 L790.7,9.3" stroke="#1f2023" stroke-width="1.1" fill="none"/>
<!-- nav -->
<g stroke="#7d8085" stroke-width="0.8" fill="none" stroke-linecap="round" stroke-linejoin="round">
<path d="M15,33.4 H9.2 M11.8,30.7 L9.1,33.4 L11.8,36.1"/>
<path d="M28,33.4 H33.8 M31.2,30.7 L33.9,33.4 L31.2,36.1"/>
<path d="M52.9,32.2 A2.9,2.9 0 1 0 53.1,34.3 M53.2,30.4 V32.4 H51.2"/>
</g>
<!-- site info -->
<circle cx="73" cy="33.6" r="5.6" fill="#fff"/>
<g stroke="#2a2c30" stroke-width="0.85" fill="none" stroke-linecap="round"><path d="M70.3,32.1 H71.2 M73.6,32.1 H75.8 M70.3,35.2 H72.4 M74.9,35.2 H75.8"/><circle cx="72.3" cy="32.1" r="0.9" fill="#2a2c30" stroke="none"/><circle cx="73.8" cy="35.2" r="0.9" fill="#2a2c30" stroke="none"/></g>
<!-- install + star -->
<g stroke="#2a2c30" stroke-width="0.8" fill="none" stroke-linejoin="round" stroke-linecap="round">
<path d="M699.8,30.6 H694.2 V35.6 H701.6 V34.2 M696.4,37 H699.6 M701.2,30 V32.6 M700,31.6 L701.2,32.8 L702.4,31.6"/>
<path d="M713.2,30.2 L714.2,32.4 L716.6,32.7 L714.8,34.3 L715.3,36.7 L713.2,35.5 L711.1,36.7 L711.6,34.3 L709.8,32.7 L712.2,32.4 Z"/>
</g>
<!-- extension puzzle -->
<path d="M737.6,31.4 H739.4 A1.1,1.1 0 0 1 741.6,31.4 H743.2 V33.2 A1.1,1.1 0 0 1 743.2,35.4 V37 H737.6 Z" stroke="#5a5d62" stroke-width="0.8" fill="none" stroke-linejoin="round"/>
<rect x="753.6" y="29.5" width="0.8" height="8" fill="#cfd8ee"/>
<!-- avatar -->
<circle cx="768.6" cy="33.6" r="4.9" fill="#6a3fb0"/><circle cx="768.6" cy="33.6" r="3.1" fill="#d24d57" opacity=".75"/><circle cx="768.6" cy="33.6" r="4.5" fill="none" stroke="#5b5fc7" stroke-width="0.9"/>
<g fill="#4a4d52"><circle cx="787.6" cy="31.2" r="0.65"/><circle cx="787.6" cy="33.6" r="0.65"/><circle cx="787.6" cy="36" r="0.65"/></g>
<!-- bookmarks icons -->
<g stroke="#a7aaaf" stroke-width="0.7" fill="none"><rect x="10.6" y="49.8" width="2.6" height="2.6"/><rect x="14.9" y="49.8" width="2.6" height="2.6"/><rect x="10.6" y="54.1" width="2.6" height="2.6"/><rect x="14.9" y="54.1" width="2.6" height="2.6"/></g>
<rect x="25.7" y="49.5" width="0.8" height="7.6" fill="#dfe5f2"/>
<circle cx="38.1" cy="53.3" r="3.3" fill="#8e9196"/><path d="M35.6,52.2 C36.8,51.8 37.4,53.4 38.6,53.2 C39.6,53 39.4,54.6 40.6,54.6 M37.6,50.4 C38.2,51.2 39.6,50.8 40.2,51.6" stroke="#fff" stroke-width="0.7" fill="none"/>
<circle cx="84.8" cy="53.3" r="3.5" fill="#6c6f77"/><rect x="84.3" y="51.6" width="1" height="3.4" fill="#fff"/>
<g><circle cx="166.4" cy="53.3" r="3.4" fill="none" stroke="#3c3f45" stroke-width="0.9"/><path d="M166.4,50.6 V56 M165,51.6 C166,52.6 166,54 165,55 M167.8,51.6 C166.8,52.6 166.8,54 167.8,55" stroke="#3c3f45" stroke-width="0.8" fill="none"/></g>
<rect x="245.2" y="49.6" width="7.8" height="7.4" rx="0.8" fill="#4b5fc0"/><rect x="246.4" y="52" width="5.4" height="1.6" fill="#fff"/><rect x="246.4" y="54.4" width="2.2" height="1.6" fill="#fff"/><rect x="249.4" y="54.4" width="2.4" height="1.6" fill="#fff"/>
<path d="M329.6,50.2 C331.4,50.6 331.2,52.4 330.4,53 M333.4,54.6 A2.4,2.4 0 1 1 330.4,52.4" stroke="#7da7e8" stroke-width="0.9" fill="none" stroke-linecap="round"/>
<path d="M410.9,50.4 H414 L416.6,55 L415.1,57.4 H409.9 L408.4,55 Z" fill="#fbbc04"/><path d="M410.9,50.4 L408.4,55 L409.9,57.4 L412.5,52.9 Z" fill="#1ea362"/><path d="M409.9,57.4 H415.1 L416.6,55 H411.3 Z" fill="#4688f4"/>
<rect x="726.6" y="49.5" width="0.8" height="7.6" fill="#d5dcee"/>
<path d="M736.5,50.6 H739.4 L740.3,51.6 H744.6 V56.4 H736.5 Z" stroke="#6a6d72" stroke-width="0.75" fill="none" stroke-linejoin="round"/>
<!-- app toolbar icons -->
<g stroke="#7b8192" stroke-width="0.75"><path d="M7,73.1 H16.2 M7,79.4 H16.2"/><path d="M7,76.3 H16.2" stroke="#6f8fc0"/></g>
<g fill="#1d3160"><circle cx="89.3" cy="74.4" r="2"/><path d="M85.6,80.6 V79.6 C85.6,77.6 87.2,77 89.3,77 C91.4,77 93,77.6 93,79.6 V80.6 Z"/></g>
<path d="M93.2,71.4 H95 M94.1,70.5 V72.3" stroke="#3f78c8" stroke-width="0.6"/>
<g stroke="#1d3160" stroke-width="0.85" fill="none" stroke-linecap="round"><path d="M111.2,74.6 H115.4 A2.5,2.5 0 0 1 115.4,79.6 H112.8"/><path d="M112.6,72.6 L110.4,74.6 L112.6,76.6 Z" fill="#1d3160" stroke="none"/></g>
<g stroke="#a3aabb" stroke-width="0.85" fill="none" stroke-linecap="round"><path d="M138.4,74.6 H134.2 A2.5,2.5 0 0 0 134.2,79.6 H136.8"/><path d="M137,72.6 L139.2,74.6 L137,76.6 Z" fill="#a3aabb" stroke="none"/></g>
<!-- status bar icons -->
<g stroke="#2c2f3a" stroke-width="1.0" fill="none"><circle cx="10.5" cy="524.4" r="5.6"/><circle cx="29.3" cy="524.4" r="5.5"/><ellipse cx="29.3" cy="524.4" rx="2.6" ry="5.5" stroke-width="0.7"/><path d="M24,522.4 H34.6 M24,526.4 H34.6 M29.3,518.9 V529.9" stroke-width="0.6"/><rect x="44.8" y="518.6" width="8.2" height="12.4" rx="4" stroke="#3c3f4c" stroke-width="0.95"/><path d="M48.9,518.6 V523.4 M44.8,523.4 H53" stroke="#3c3f4c" stroke-width="0.8"/></g>
<text x="10.5" y="527.3" font-family="Liberation Sans, sans-serif" font-size="8" font-weight="bold" fill="#2c2f3a" text-anchor="middle">?</text>
<!-- GENERATED -->
<g transform="translate(782.7,135.5)" stroke="#1d3160" stroke-width="0.8" fill="none" stroke-linejoin="round" stroke-linecap="round"><path d="M0.00,-5.60 L4.85,-2.80 L4.85,2.80 L0.00,5.60 L-4.85,2.80 L-4.85,-2.80 Z"/><circle cx="0.3" cy="-0.4" r="2.6" stroke-width="0.7"/><path d="M0,5.6 V2.6 M-4.85,-2.8 L-2,-1.4 M4.85,-2.8 L2.6,-1.6" stroke-width="0.6"/></g>
<g transform="translate(782.7,163.2)" stroke="#1d3160" stroke-width="0.8" fill="none" stroke-linejoin="round" stroke-linecap="round"><path d="M0.00,-5.50 L2.51,-4.05 L2.51,-1.15 L0.00,0.30 L-2.51,-1.15 L-2.51,-4.05 Z"/><path d="M0.00,-2.60 L2.51,-1.15 M0.00,-2.60 L-2.51,-1.15 M0.00,-2.60 L0.00,-5.50" stroke-width="0.5"/><path d="M-2.60,-1.00 L-0.09,0.45 L-0.09,3.35 L-2.60,4.80 L-5.11,3.35 L-5.11,0.45 Z"/><path d="M-2.60,1.90 L-0.09,3.35 M-2.60,1.90 L-5.11,3.35 M-2.60,1.90 L-2.60,-1.00" stroke-width="0.5"/><path d="M2.60,-1.00 L5.11,0.45 L5.11,3.35 L2.60,4.80 L0.09,3.35 L0.09,0.45 Z"/><path d="M2.60,1.90 L5.11,3.35 M2.60,1.90 L0.09,3.35 M2.60,1.90 L2.60,-1.00" stroke-width="0.5"/></g>
<g transform="translate(782.7,191.0)" stroke="#1d3160" stroke-width="0.8" fill="none" stroke-linejoin="round" stroke-linecap="round"><path d="M-5.4,-1.6 L0,-3.8 L5.4,-1.6 L0,0.6 Z"/><path d="M-3,-0.4 V2.6 C-1.6,4 1.6,4 3,2.6 V-0.4" /><path d="M1.4,0.2 V4.4" stroke-width="0.6"/><circle cx="1.4" cy="5" r="0.55" fill="#c0392b" stroke="none"/></g>
<g transform="translate(782.7,218.7)" stroke="#1d3160" stroke-width="0.8" fill="none" stroke-linejoin="round" stroke-linecap="round"><path d="M0.00,-5.60 L4.85,-2.80 L4.85,2.80 L0.00,5.60 L-4.85,2.80 L-4.85,-2.80 Z"/><path d="M0.00,-3.70 L3.20,-1.85 L3.20,1.85 L0.00,3.70 L-3.20,1.85 L-3.20,-1.85 Z" stroke-width="0.65"/><path d="M0.00,-1.90 L1.65,-0.95 L1.65,0.95 L0.00,1.90 L-1.65,0.95 L-1.65,-0.95 Z" stroke-width="0.6"/><path d="M0,5.6 V2" stroke-width="0.6"/></g>
<g transform="translate(782.7,246.4)" stroke="#1d3160" stroke-width="0.8" fill="none" stroke-linejoin="round" stroke-linecap="round"><path d="M0.00,-5.40 L4.68,-2.70 L4.68,2.70 L0.00,5.40 L-4.68,2.70 L-4.68,-2.70 Z"/><path d="M0,0 L4.68,-2.70 M0,0 L-4.68,-2.70 M0,0 V5.4" stroke-width="0.65"/><path d="M-4.6,-0.6 L-0.8,3.6 M-4.6,1.6 L-2.4,4 M-3,-1.8 L-0.2,1.4 M-4.4,-1.6 L-1,-0.4" stroke-width="0.6"/></g>
<g transform="translate(782.7,274.1)" stroke="#1d3160" stroke-width="0.8" fill="none" stroke-linejoin="round" stroke-linecap="round"><path d="M-5.2,-1.2 L-1.6,-5.2 L1.6,-3.6 L5.2,-1.4 V4 L1.4,5.6 L-5.2,4.2 Z"/><path d="M-1.6,-5.2 L1.4,-0.8 V5.6 M1.4,-0.8 L5.2,-1.4 M-5.2,-1.2 L-2,0 V4.8 M-2,0 L1.4,-0.8" stroke-width="0.6"/></g>
<g transform="translate(782.7,301.9)" stroke="#1d3160" stroke-width="0.8" fill="none" stroke-linejoin="round" stroke-linecap="round"><path d="M-5.4,1.2 L0.4,-4.4 H4.2 L5.2,-3.2 V0.2 L-0.8,5 H-3.2 L-5.4,2.8 Z" /><circle cx="-2.8" cy="2" r="0.5" fill="#1d3160" stroke="none"/></g>
<g transform="translate(782.7,329.6)" stroke="#1d3160" stroke-width="0.8" fill="none" stroke-linejoin="round" stroke-linecap="round"><path d="M-5,-2.2 L-0.6,-5 L3,-0.6 L-1.4,2.4 Z"/><path d="M-1.4,2.4 L3,-0.6 L5.4,2.2 L0.8,5.2 Z" fill="#1d3160"/></g>
<g transform="translate(782.7,357.3)" stroke="#1d3160" stroke-width="0.8" fill="none" stroke-linejoin="round" stroke-linecap="round"><rect x="-4.8" y="-0.8" width="9.6" height="6.2" rx="0.6"/><path d="M-5,-2.2 L4.2,-4.6 L4.6,-3 L-4.6,-0.8 Z" fill="#1d3160" stroke-width="0.5"/><path d="M-1.2,0.8 V3.8 L1.6,2.3 Z" stroke-width="0.6"/><path d="M-3.4,1 V3.6" stroke-width="0.5"/></g>
<g transform="translate(782.7,385.1)" stroke="#1d3160" stroke-width="0.8" fill="none" stroke-linejoin="round" stroke-linecap="round"><circle cx="-2.9" cy="0" r="2.5"/><circle cx="2.9" cy="0" r="2.5"/></g>
<g transform="translate(782.7,412.8)" stroke="#1d3160" stroke-width="0.8" fill="none" stroke-linejoin="round" stroke-linecap="round"><circle cx="0" cy="0" r="5.2"/><path d="M0,-5.2 A5.2,5.2 0 0 1 0,5.2 Z" fill="#8fa3c8" stroke-width="0.6"/><path d="M0,-5.2 V5.2" /></g>
<g transform="translate(782.7,440.5)" stroke="#1d3160" stroke-width="0.8" fill="none" stroke-linejoin="round" stroke-linecap="round"><circle cx="0" cy="0" r="5.4"/><path d="M0,-1.2 V3" stroke-width="0.95"/><circle cx="0" cy="-2.8" r="0.5" fill="#1d3160" stroke="none"/></g>
<g transform="translate(13.7,135.5)" stroke-linejoin="round" stroke-linecap="round"><circle cx="-1.8" cy="-2" r="3.9" fill="#f2f5fb" stroke="#5a6d96" stroke-width="0.75"/><path d="M-4.4,-2.6 A2.8,2.8 0 0 1 -2.2,-4.8" stroke="#7fb0e8" stroke-width="0.8" fill="none"/><path d="M1.4,1 L5.2,4.6" stroke="#1d3160" stroke-width="1.5"/></g>
<g transform="translate(13.5,164.6)" stroke-linejoin="round" stroke-linecap="round"><path d="M-5.2,1 L0.8,-5 L5,-0.8 L-1,5.2 Z" fill="#f2f5fb" stroke="#1d3160" stroke-width="0.7"/><path d="M-3.2,-1 L-1.2,-3 L3,1.2 L1,3.2 Z" fill="#3f74c4" stroke="#1d3160" stroke-width="0.5"/><path d="M-0.6,5.8 H5.4" stroke="#6fa6e6" stroke-width="0.9"/></g>
<g transform="translate(13.2,186.3)" stroke-linejoin="round" stroke-linecap="round"><path d="M-1.6,-3.6 V2.6 L-0.2,1.4 L0.8,3.8 L1.9,3.3 L0.9,1 L2.9,0.9 Z" fill="#16213f" stroke="#16213f" stroke-width="0.3"/></g>
<g transform="translate(13.5,207.2)" stroke-linejoin="round" stroke-linecap="round"><path d="M-3.4,2.6 L4.2,-5.2 L5.4,-4 L-2.2,3.8 Z" fill="#e2513c" stroke="#b8332a" stroke-width="0.4"/><path d="M-3.4,2.6 L-2.2,3.8 L-5.2,5.4 Z" fill="#1d3160" stroke="#1d3160" stroke-width="0.4"/></g>
<g transform="translate(13.5,229)" stroke-linejoin="round" stroke-linecap="round"><rect x="-4.6" y="-4" width="8.6" height="8.6" fill="#d3e4f6" stroke="#3a5a94" stroke-width="0.7"/><path d="M-4.6,4.6 L4,-4" stroke="#1d3160" stroke-width="0.7"/><circle cx="4.2" cy="-4.2" r="1.1" fill="#d8262c"/><circle cx="-4.6" cy="4.6" r="0.9" fill="#1d3160"/></g>
<g transform="translate(13.5,250.8)" stroke-linejoin="round" stroke-linecap="round"><path d="M-6,1.6 L-0.4,-0.6 L6,1.6 L0.4,4 Z" fill="#cfe2f6" stroke="#3f74c4" stroke-width="0.6"/><path d="M-6,1.6 V3.2 L0.4,5.6 L6,3.2 V1.6 L0.4,4 Z" fill="#8fb9ea" stroke="#3f74c4" stroke-width="0.5"/><path d="M0,2 V-2.6" stroke="#d8262c" stroke-width="1.5"/><path d="M-2.2,-2.6 L0,-5.6 L2.2,-2.6 Z" fill="#d8262c"/></g>
<g transform="translate(13.6,271.6)" stroke-linejoin="round" stroke-linecap="round"><g transform="rotate(0)"><path d="M0,-1.4 V-3.4" stroke="#d8262c" stroke-width="1.1"/><path d="M-1.6,-3.2 L0,-5.6 L1.6,-3.2 Z" fill="#d8262c"/></g><g transform="rotate(90)"><path d="M0,-1.4 V-3.4" stroke="#d8262c" stroke-width="1.1"/><path d="M-1.6,-3.2 L0,-5.6 L1.6,-3.2 Z" fill="#d8262c"/></g><g transform="rotate(180)"><path d="M0,-1.4 V-3.4" stroke="#d8262c" stroke-width="1.1"/><path d="M-1.6,-3.2 L0,-5.6 L1.6,-3.2 Z" fill="#d8262c"/></g><g transform="rotate(270)"><path d="M0,-1.4 V-3.4" stroke="#d8262c" stroke-width="1.1"/><path d="M-1.6,-3.2 L0,-5.6 L1.6,-3.2 Z" fill="#d8262c"/></g></g>
<g transform="translate(13.6,293)" stroke-linejoin="round" stroke-linecap="round"><path d="M-4,1.4 A4.2,4.2 0 0 1 1.6,-3.9" stroke="#d8262c" stroke-width="1.1" fill="none"/><path d="M4,-1.4 A4.2,4.2 0 0 1 -1.6,3.9" stroke="#d8262c" stroke-width="1.1" fill="none"/><path d="M0.8,-5.8 L3.8,-3.6 L0.6,-2.2 Z" fill="#d8262c"/><path d="M-0.8,5.8 L-3.8,3.6 L-0.6,2.2 Z" fill="#d8262c"/></g>
<g transform="translate(13.5,314.6)" stroke-linejoin="round" stroke-linecap="round"><rect x="-5.4" y="-4.6" width="10.6" height="9.6" fill="#e4eefa" stroke="#1d3160" stroke-width="0.8"/><rect x="-5.4" y="0.2" width="5" height="4.8" fill="#b7d3f2" stroke="#1d3160" stroke-width="0.6"/><path d="M0.2,0 L3.6,-3.4" stroke="#d8262c" stroke-width="1.2"/><path d="M1.6,-4.6 H5 V-1.2 Z" fill="#d8262c"/></g>
<g transform="translate(13.5,335.6)" stroke-linejoin="round" stroke-linecap="round"><path d="M-2.6,-2.2 L1.8,-4.6 L5.2,-0.2 L5,3.4 L0.4,5.4 L-3,1.6 Z" fill="#e8f0fb" stroke="#1d3160" stroke-width="0.8"/><path d="M-2.6,-2.2 C-0.6,-0.4 2.6,-1.6 1.8,-4.6" stroke="#1d3160" stroke-width="0.7" fill="none"/><path d="M-2.4,-2 C-5.4,-0.6 -5.8,2.2 -5,4.6" stroke="#4d8fe0" stroke-width="1.3" fill="none"/><path d="M-1,-4.6 C-2.4,-3.6 -1,-1.4 0.6,-1.6" stroke="#1d3160" stroke-width="0.6" fill="none"/></g>
<g transform="translate(13.5,356.6)" stroke-linejoin="round" stroke-linecap="round"><ellipse cx="0" cy="0.6" rx="5.6" ry="2.3" fill="none" stroke="#d8262c" stroke-width="1.4"/><path d="M0,-5.2 V5.6" stroke="#7a1a1e" stroke-width="0.7"/><path d="M-3.4,-1.6 L-0.6,-2.6 L-1.2,0 Z M3.4,-1.6 L0.6,-2.6 L1.2,0 Z" fill="#d8262c"/></g>
<g transform="translate(13.8,378.4)" stroke-linejoin="round" stroke-linecap="round"><path d="M-2.6,1 V-1.2 C-2.6,-2.2 -1.2,-2.2 -1.2,-1.2 V0 C0.8,-0.6 3.2,0 3.4,1.8 C3.6,4 2.4,5.6 0.4,5.6 C-1.6,5.6 -2.4,4.4 -3.6,2.6 C-4,1.8 -3.2,1.2 -2.6,1.8" fill="#eef3fb" stroke="#1d3160" stroke-width="0.7"/><path d="M-2.4,-4.2 H2.4" stroke="#d8262c" stroke-width="0.9"/><path d="M-4.8,-4.2 L-2.4,-5.6 V-2.8 Z M4.8,-4.2 L2.4,-5.6 V-2.8 Z" fill="#d8262c"/></g>
<g transform="translate(13.6,399.6)" stroke-linejoin="round" stroke-linecap="round"><path d="M-3,-3.4 L1.4,-5.2 L4.8,-1.6 L3.6,2 L-0.6,3.4 L-3.6,0.4 Z" fill="#eef3fb" stroke="#1d3160" stroke-width="0.8"/><circle cx="1" cy="-1.2" r="1.7" fill="#d8262c"/><path d="M-2.6,2.2 L-5.4,5 " stroke="#1d3160" stroke-width="0.9"/></g>
<g transform="translate(13.6,424.2)" stroke-linejoin="round" stroke-linecap="round"><path d="M-4.6,-0.2 L0.8,-4.6 M-3,1.8 L2.4,-2.6 M-5.4,-1.4 L-3.6,0.8 M0,-5.6 L1.8,-3.4" stroke="#1d3160" stroke-width="0.6" fill="none"/><circle cx="4.6" cy="0" r="1.3" fill="#d8262c"/><circle cx="-0.6" cy="4.6" r="1.3" fill="#d8262c"/><path d="M2.4,-2.6 L4.6,0 M-3,1.8 L-0.6,4.6" stroke="#1d3160" stroke-width="0.5"/></g>
<g transform="translate(13.6,445.8)" stroke-linejoin="round" stroke-linecap="round"><rect x="-2.8" y="-5" width="8.6" height="7.4" fill="#eef3fb" stroke="#1d3160" stroke-width="0.8"/><path d="M-2.8,-1.4 H-5.4 V5" stroke="#1d3160" stroke-width="0.7" fill="none"/><path d="M-6.6,3.6 L-5.4,5.8 L-4.2,3.6 Z" fill="#1d3160"/><text x="1.5" y="0.9" font-family="Liberation Serif, serif" font-size="5.2" font-weight="bold" fill="#1d3160" text-anchor="middle">A1</text></g>
<g transform="translate(13.6,468)" stroke-linejoin="round" stroke-linecap="round"><circle cx="-3.2" cy="0" r="0.55" fill="#5a6480"/><circle cx="0" cy="0" r="0.55" fill="#5a6480"/><circle cx="3.2" cy="0" r="0.55" fill="#5a6480"/></g>
<g transform="translate(678,89.8)"><path d="M0.00,-10.20 L8.83,-5.10 L8.83,5.10 L0.00,10.20 L-8.83,5.10 L-8.83,-5.10 Z" fill="#1f5fb0" stroke="#1f5fb0" stroke-width="1.22" stroke-linejoin="round"/><path d="M0,0 L8.83,-5.10 L8.83,5.10 L0.00,10.20 Z" fill="#0b3c86"/><g stroke="#e6eefc" stroke-width="1.33" fill="none" stroke-linejoin="round" stroke-linecap="round"><path d="M-6.32,-3.06 L-0.51,-5.92 L5.30,-2.86 L5.30,3.47 L0.00,6.32"/><path d="M-6.32,-0.20 L-0.51,-3.06 L2.65,-1.43 L2.65,2.24 L-2.04,4.69"/><path d="M-6.32,2.65 L-0.51,-0.20 L0.00,1.22 L-4.28,3.47"/></g></g>
<g transform="translate(792,525)"><path d="M0.00,-5.60 L4.85,-2.80 L4.85,2.80 L0.00,5.60 L-4.85,2.80 L-4.85,-2.80 Z" fill="#1f5fb0" stroke="#1f5fb0" stroke-width="0.67" stroke-linejoin="round"/><path d="M0,0 L4.85,-2.80 L4.85,2.80 L0.00,5.60 Z" fill="#0b3c86"/><g stroke="#e6eefc" stroke-width="0.73" fill="none" stroke-linejoin="round" stroke-linecap="round"><path d="M-3.47,-1.68 L-0.28,-3.25 L2.91,-1.57 L2.91,1.90 L0.00,3.47"/><path d="M-3.47,-0.11 L-0.28,-1.68 L1.46,-0.78 L1.46,1.23 L-1.12,2.58"/><path d="M-3.47,1.46 L-0.28,-0.11 L0.00,0.67 L-2.35,1.90"/></g></g>
</svg>

<svg class="ic" style="left:0;top:0;will-change:transform;opacity:0.999" width="800" height="533" viewBox="0 0 800 533" font-family="Liberation Sans, sans-serif"><text id="tabt" x="66.0" y="13.15" font-size="6.8" letter-spacing="-0.067" style="fill:#1f2023;">SketchUp</text>
<text id="url" x="83.6" y="35.90" font-size="7.4" letter-spacing="0.307" style="fill:#1f2023;">app.sketchup.com/app</text>
<text id="bm1" x="45.9" y="55.65" font-size="6.7" letter-spacing="-0.022" style="fill:#909398;">Backend</text>
<text id="bm2" x="92.4" y="55.65" font-size="6.7" letter-spacing="-0.042" style="fill:#909398;">Bluegarden - Orki…</text>
<text id="bm3" x="174.5" y="55.65" font-size="6.7" letter-spacing="-0.044" style="fill:#909398;">Support : Bonnier…</text>
<text id="bm4" x="256.8" y="55.65" font-size="6.7" letter-spacing="-0.053" style="fill:#909398;">Vertex - Intern søg…</text>
<text id="bm5" x="338.8" y="55.65" font-size="6.7" letter-spacing="0.029" style="fill:#909398;">Salg fra artikler GA4</text>
<text id="bm6" x="420.5" y="55.65" font-size="6.7" letter-spacing="-0.142" style="fill:#909398;">PDF-arkiv CUE</text>
<text id="bm7" x="749.2" y="55.65" font-size="6.7" letter-spacing="-0.013" style="fill:#4a4d52;">All Bookmarks</text>
<text id="model" x="28.8" y="79.40" font-size="7.4" letter-spacing="0.738" style="fill:#1d3160;font-weight:bold;stroke:#1d3160;stroke-width:0.25px;">3D-model2</text>
<text id="save" x="153.8" y="79.40" font-size="7.2" letter-spacing="-0.282" style="fill:#1d3160;font-weight:bold;stroke:#1d3160;stroke-width:0.2px;">SAVE</text>
<text id="stat" x="61.7" y="527.50" font-size="7.2" letter-spacing="0.264" style="fill:#222;">Drag to orbit. Shift = Pan, Option = suspend gravity.</text>
<text id="meas" x="650.0" y="527.50" font-size="7.2" letter-spacing="0.223" style="fill:#222;">Measurements</text>
<text id="upg" x="727.0" y="508.90" font-size="6.9" letter-spacing="0.166" style="fill:#fff;">Upgrade Now</text>
<text id="logo" x="693.8" y="96.00" font-size="18.3" letter-spacing="-0.124" style="fill:#1a1b2c;stroke:#1a1b2c;stroke-width:0.35px;">SketchUp</text>
<text id="lab0" x="721.5" y="138.10" font-size="6.7" letter-spacing="0.410" style="fill:#1d3160;font-weight:bold;stroke:#1d3160;stroke-width:0.22px;">Entity Info</text>
<text id="lab1" x="714.7" y="165.83" font-size="6.7" letter-spacing="0.303" style="fill:#1d3160;font-weight:bold;stroke:#1d3160;stroke-width:0.22px;">Components</text>
<text id="lab2" x="722.8" y="193.56" font-size="6.7" letter-spacing="0.476" style="fill:#1d3160;font-weight:bold;stroke:#1d3160;stroke-width:0.22px;">Instructor</text>
<text id="lab3" x="708.0" y="221.29" font-size="6.7" letter-spacing="0.371" style="fill:#1d3160;font-weight:bold;stroke:#1d3160;stroke-width:0.22px;">3D Warehouse</text>
<text id="lab4" x="725.2" y="249.02" font-size="6.7" letter-spacing="0.512" style="fill:#1d3160;font-weight:bold;stroke:#1d3160;stroke-width:0.22px;">Materials</text>
<text id="lab5" x="737.6" y="276.75" font-size="6.7" letter-spacing="0.196" style="fill:#1d3160;font-weight:bold;stroke:#1d3160;stroke-width:0.22px;">Styles</text>
<text id="lab6" x="742.4" y="304.48" font-size="6.7" letter-spacing="0.258" style="fill:#1d3160;font-weight:bold;stroke:#1d3160;stroke-width:0.22px;">Tags</text>
<text id="lab7" x="727.6" y="332.21" font-size="6.7" letter-spacing="0.223" style="fill:#1d3160;font-weight:bold;stroke:#1d3160;stroke-width:0.22px;">Shadows</text>
<text id="lab8" x="734.6" y="359.94" font-size="6.7" letter-spacing="0.052" style="fill:#1d3160;font-weight:bold;stroke:#1d3160;stroke-width:0.22px;">Scenes</text>
<text id="lab9" x="732.6" y="387.67" font-size="6.7" letter-spacing="0.317" style="fill:#1d3160;font-weight:bold;stroke:#1d3160;stroke-width:0.22px;">Display</text>
<text id="lab10" x="701.4" y="415.40" font-size="6.7" letter-spacing="0.401" style="fill:#1d3160;font-weight:bold;stroke:#1d3160;stroke-width:0.22px;">Soften / Smooth</text>
<text id="lab11" x="720.8" y="443.13" font-size="6.7" letter-spacing="0.451" style="fill:#1d3160;font-weight:bold;stroke:#1d3160;stroke-width:0.22px;">Model Info</text></svg>
</div>
</body></html>
